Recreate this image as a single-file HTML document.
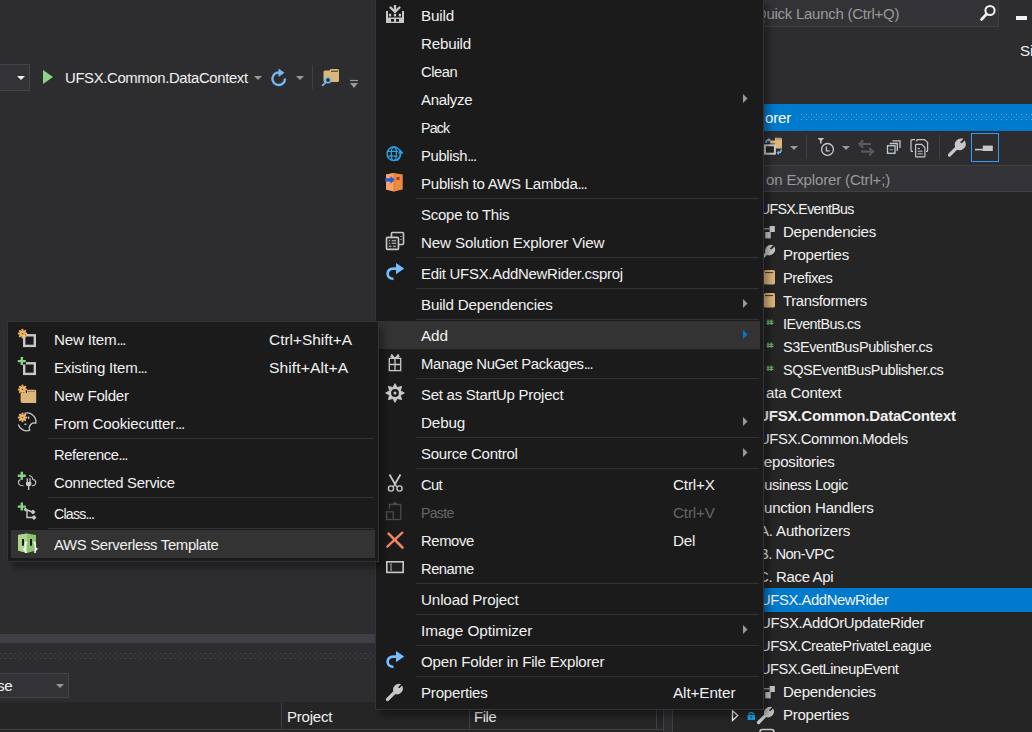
<!DOCTYPE html>
<html><head><meta charset="utf-8"><style>
html,body{margin:0;padding:0;}
body{width:1032px;height:732px;overflow:hidden;position:relative;background:#2D2D30;font-family:"Liberation Sans",sans-serif;}
.a{position:absolute;}
.t{position:absolute;white-space:nowrap;line-height:18px;height:18px;}
</style></head><body>
<div class="a" style="left:-2px;top:64px;width:32px;height:27px;background:#333337;border:1px solid #434346;box-sizing:border-box;"></div><svg class="a" style="left:17px;top:76px;" width="8" height="4" viewBox="0 0 8 4"><path d="M0 0H8L4.0 4Z" fill="#F1F1F1"/></svg><svg class="a" style="left:42px;top:69px;" width="12" height="16" viewBox="0 0 12 16"><path d="M1 1L11 8L1 15Z" fill="#8DD28A"/></svg><div class="t" style="left:64.50px;top:69px;color:#F1F1F1;font-size:15.5px;letter-spacing:-0.362px;transform:scaleX(0.9583);transform-origin:0 0;">UFSX.Common.DataContext</div><svg class="a" style="left:254px;top:76px;" width="8" height="4" viewBox="0 0 8 4"><path d="M0 0H8L4.0 4Z" fill="#999999"/></svg><svg class="a" style="left:271px;top:67.5px;" width="18" height="20" viewBox="0 0 18 20"><path d="M14 10.5 A6.3 6.3 0 1 1 8.5 4.5" fill="none" stroke="#75B8F0" stroke-width="2.4"/><path d="M7.5 0.5 L13.5 4.8 L7.5 9Z" fill="#75B8F0"/></svg><svg class="a" style="left:296px;top:76px;" width="8" height="4" viewBox="0 0 8 4"><path d="M0 0H8L4.0 4Z" fill="#999999"/></svg><div class="a" style="left:312px;top:65px;width:1px;height:24px;background:#3F3F46;"></div><svg class="a" style="left:320px;top:67px;" width="22" height="21" viewBox="0 0 22 21"><path d="M3.5 5Q3.5 3.5 5 3.5H9.5L10.5 2H17.5Q19 2 19 3.5V13.5Q19 15 17.5 15H5Q3.5 15 3.5 13.5Z" fill="#DCB67A"/><path d="M11 3.7H18V4.7H11Z" fill="#2D2D30"/><circle cx="8" cy="13.1" r="2.7" fill="#2D2D30" stroke="#75B8F0" stroke-width="1.5"/><path d="M6.1 15 L2.6 18.3" stroke="#75B8F0" stroke-width="1.8" stroke-linecap="round"/></svg><svg class="a" style="left:349px;top:79px;" width="10" height="10" viewBox="0 0 10 10"><path d="M1 1.5H9" stroke="#999" stroke-width="1.2"/><path d="M1 4H9L5 9Z" fill="#999"/></svg><div class="a" style="left:0px;top:634px;width:376px;height:9px;background:#3F3F46;"></div><svg class="a" style="left:0;top:653px" width="376" height="7"><defs><pattern id="gg" width="5" height="5" patternUnits="userSpaceOnUse"><rect x="0" y="0" width="1" height="1" fill="#505055"/><rect x="2.5" y="2.5" width="1" height="1" fill="#505055"/></pattern></defs><rect x="0" y="0" width="376" height="6.5" fill="url(#gg)"/></svg><div class="a" style="left:-2px;top:673px;width:71px;height:25px;background:#333337;border:1px solid #434346;box-sizing:border-box;"></div><div class="t" style="left:-2.99px;top:677px;color:#F1F1F1;font-size:15.5px;letter-spacing:-0.367px;transform:scaleX(0.9770);transform-origin:0 0;">se</div><svg class="a" style="left:56px;top:684px;" width="8" height="4" viewBox="0 0 8 4"><path d="M0 0H8L4.0 4Z" fill="#999999"/></svg><div class="a" style="left:0px;top:702px;width:672px;height:30px;background:#252526;"></div><div class="a" style="left:0px;top:729px;width:663px;height:1px;background:#3F3F46;"></div><div class="a" style="left:281px;top:703px;width:1px;height:26px;background:#3F3F46;"></div><div class="a" style="left:469px;top:703px;width:1px;height:26px;background:#3F3F46;"></div><div class="a" style="left:656px;top:703px;width:1px;height:26px;background:#3F3F46;"></div><div class="a" style="left:663px;top:702px;width:9px;height:30px;background:#2D2D30;"></div><div class="a" style="left:663px;top:702px;width:1px;height:30px;background:#3F3F46;"></div><div class="a" style="left:672px;top:702px;width:1px;height:30px;background:#3F3F46;"></div><div class="t" style="left:287.20px;top:708px;color:#F1F1F1;font-size:15.5px;letter-spacing:-0.238px;transform:scaleX(0.9695);transform-origin:0 0;">Project</div><div class="t" style="left:474.00px;top:708px;color:#F1F1F1;font-size:15.5px;letter-spacing:-0.384px;transform:scaleX(0.9516);transform-origin:0 0;">File</div><div class="a" style="left:700px;top:-1px;width:299px;height:28px;background:#333337;border:1px solid #3F3F46;box-sizing:border-box;"></div><div class="t" style="left:754.61px;top:5px;color:#999999;font-size:15.5px;letter-spacing:-0.253px;transform:scaleX(0.9652);transform-origin:0 0;">Quick Launch (Ctrl+Q)</div><svg class="a" style="left:978px;top:4px;" width="19" height="18" viewBox="0 0 19 18"><circle cx="12" cy="6.5" r="4.6" fill="none" stroke="#F1F1F1" stroke-width="2"/><path d="M8.6 10 L3.5 15.5" stroke="#F1F1F1" stroke-width="2.6" stroke-linecap="round"/></svg><div class="a" style="left:1016px;top:16px;width:11px;height:4px;background:#F1F1F1;"></div><div class="t" style="left:1020.00px;top:42px;color:#F1F1F1;font-size:15.5px;letter-spacing:-0.178px;transform:scaleX(0.9770);transform-origin:0 0;">Sign in</div><div class="a" style="left:673px;top:104px;width:359px;height:628px;background:#252526;"></div><div class="a" style="left:672px;top:104px;width:360px;height:27px;background:#007ACC;"></div><div class="t" style="left:764.60px;top:109px;color:#FFFFFF;font-size:15.5px;letter-spacing:-0.198px;transform:scaleX(0.9780);transform-origin:0 0;">orer</div><svg class="a" style="left:790px;top:112px" width="242" height="10"><defs><pattern id="gp" x="1" y="2" width="5" height="5" patternUnits="userSpaceOnUse"><rect x="0" y="0" width="1" height="1" fill="#66B0E4"/><rect x="2.5" y="2.5" width="1" height="1" fill="#66B0E4"/></pattern></defs><rect x="11" y="2" width="232" height="6.5" fill="url(#gp)"/></svg><div class="a" style="left:672px;top:131px;width:360px;height:34px;background:#2D2D30;"></div><div class="a" style="left:672px;top:165px;width:360px;height:27px;background:#333337;"></div><div class="a" style="left:672px;top:165px;width:360px;height:1px;background:#3F3F46;"></div><div class="a" style="left:672px;top:191px;width:360px;height:1px;background:#3F3F46;"></div><div class="t" style="left:765.80px;top:171px;color:#999999;font-size:15.5px;letter-spacing:-0.188px;transform:scaleX(0.9721);transform-origin:0 0;">on Explorer (Ctrl+;)</div><div class="a" style="left:806px;top:135px;width:1px;height:24px;background:#3F3F46;"></div><div class="a" style="left:939px;top:135px;width:1px;height:24px;background:#3F3F46;"></div><div class="a" style="left:971px;top:133px;width:28px;height:29px;border:1px solid #3399FF;box-sizing:border-box;"></div><div class="a" style="left:672px;top:588px;width:360px;height:24px;background:#007ACC;"></div><div class="t" style="left:760.44px;top:200px;color:#F1F1F1;font-size:15.5px;letter-spacing:-0.730px;transform:scaleX(0.9135);transform-origin:0 0;">UFSX.EventBus</div><div class="t" style="left:782.80px;top:223px;color:#F1F1F1;font-size:15.5px;letter-spacing:-0.268px;transform:scaleX(0.9693);transform-origin:0 0;">Dependencies</div><div class="t" style="left:782.80px;top:246px;color:#F1F1F1;font-size:15.5px;letter-spacing:-0.249px;transform:scaleX(0.9673);transform-origin:0 0;">Properties</div><div class="t" style="left:782.80px;top:269px;color:#F1F1F1;font-size:15.5px;letter-spacing:-0.436px;transform:scaleX(0.9423);transform-origin:0 0;">Prefixes</div><div class="t" style="left:782.80px;top:292px;color:#F1F1F1;font-size:15.5px;letter-spacing:-0.339px;transform:scaleX(0.9576);transform-origin:0 0;">Transformers</div><div class="t" style="left:782.80px;top:315px;color:#F1F1F1;font-size:15.5px;letter-spacing:-0.569px;transform:scaleX(0.9256);transform-origin:0 0;">IEventBus.cs</div><div class="t" style="left:782.80px;top:338px;color:#F1F1F1;font-size:15.5px;letter-spacing:-0.456px;transform:scaleX(0.9399);transform-origin:0 0;">S3EventBusPublisher.cs</div><div class="t" style="left:782.80px;top:361px;color:#F1F1F1;font-size:15.5px;letter-spacing:-0.495px;transform:scaleX(0.9366);transform-origin:0 0;">SQSEventBusPublisher.cs</div><div class="t" style="left:765.50px;top:384px;color:#F1F1F1;font-size:15.5px;letter-spacing:-0.193px;transform:scaleX(0.9751);transform-origin:0 0;">ata Context</div><div class="t" style="left:757.93px;top:407px;color:#F1F1F1;font-size:15.5px;letter-spacing:-0.237px;transform:scaleX(0.9741);transform-origin:0 0;font-weight:bold;">UFSX.Common.DataContext</div><div class="t" style="left:759.38px;top:430px;color:#F1F1F1;font-size:15.5px;letter-spacing:-0.400px;transform:scaleX(0.9560);transform-origin:0 0;">UFSX.Common.Models</div><div class="t" style="left:753.28px;top:453px;color:#F1F1F1;font-size:15.5px;letter-spacing:-0.191px;transform:scaleX(0.9739);transform-origin:0 0;">Repositories</div><div class="t" style="left:754.63px;top:476px;color:#F1F1F1;font-size:15.5px;letter-spacing:-0.414px;transform:scaleX(0.9442);transform-origin:0 0;">Business Logic</div><div class="t" style="left:755.02px;top:499px;color:#F1F1F1;font-size:15.5px;letter-spacing:-0.218px;transform:scaleX(0.9710);transform-origin:0 0;">Function Handlers</div><div class="t" style="left:758.64px;top:522px;color:#F1F1F1;font-size:15.5px;letter-spacing:-0.202px;transform:scaleX(0.9736);transform-origin:0 0;">A. Authorizers</div><div class="t" style="left:759.32px;top:545px;color:#F1F1F1;font-size:15.5px;letter-spacing:-0.551px;transform:scaleX(0.9468);transform-origin:0 0;">B. Non-VPC</div><div class="t" style="left:757.60px;top:568px;color:#F1F1F1;font-size:15.5px;letter-spacing:-0.329px;transform:scaleX(0.9615);transform-origin:0 0;">C. Race Api</div><div class="t" style="left:759.72px;top:591px;color:#F1F1F1;font-size:15.5px;letter-spacing:-0.411px;transform:scaleX(0.9538);transform-origin:0 0;">UFSX.AddNewRider</div><div class="t" style="left:759.55px;top:614px;color:#F1F1F1;font-size:15.5px;letter-spacing:-0.323px;transform:scaleX(0.9617);transform-origin:0 0;">UFSX.AddOrUpdateRider</div><div class="t" style="left:759.86px;top:637px;color:#F1F1F1;font-size:15.5px;letter-spacing:-0.444px;transform:scaleX(0.9429);transform-origin:0 0;">UFSX.CreatePrivateLeague</div><div class="t" style="left:759.96px;top:660px;color:#F1F1F1;font-size:15.5px;letter-spacing:-0.494px;transform:scaleX(0.9388);transform-origin:0 0;">UFSX.GetLineupEvent</div><div class="t" style="left:782.60px;top:683px;color:#F1F1F1;font-size:15.5px;letter-spacing:-0.277px;transform:scaleX(0.9683);transform-origin:0 0;">Dependencies</div><div class="t" style="left:782.60px;top:706px;color:#F1F1F1;font-size:15.5px;letter-spacing:-0.249px;transform:scaleX(0.9673);transform-origin:0 0;">Properties</div><svg class="a" style="left:762px;top:132px;" width="24" height="26" viewBox="0 0 24 26"><path d="M13 5.7H18.5Q20 5.7 20 7.2V16.4H13Z" fill="#DCB67A"/><path d="M8.2 8.5H13V11.5H8.2Z" fill="#DCB67A"/><path d="M14 7H19" stroke="#9E7E48" stroke-width="0.9"/>
<rect x="3" y="13.3" width="9.9" height="8.4" fill="#252526" stroke="#C8C8C8" stroke-width="2"/>
<path d="M4 11Q4 7.8 7 7.8" stroke="#75B8F0" stroke-width="1.6" fill="none"/><path d="M6.5 5.8L9 7.9L6.5 10Z" fill="#75B8F0"/>
<path d="M19.2 17.5Q19.2 20.8 16.5 20.8" stroke="#75B8F0" stroke-width="1.6" fill="none"/><path d="M17 18.8L14.5 20.8L17 23Z" fill="#75B8F0"/></svg><svg class="a" style="left:790px;top:146px;" width="8" height="4" viewBox="0 0 8 4"><path d="M0 0H8L4.0 4Z" fill="#999999"/></svg><svg class="a" style="left:812px;top:132px;" width="24" height="26" viewBox="0 0 24 26"><path d="M5.6 5.9H12.1L9.6 8.8V11.5H8.1V8.8Z" fill="#C8C8C8"/>
<circle cx="15.5" cy="17.4" r="5.9" fill="none" stroke="#C8C8C8" stroke-width="1.3"/><path d="M14.4 14.4V18.8H17.7" stroke="#C8C8C8" stroke-width="1.3" fill="none"/></svg><svg class="a" style="left:842px;top:146px;" width="8" height="4" viewBox="0 0 8 4"><path d="M0 0H8L4.0 4Z" fill="#999999"/></svg><svg class="a" style="left:856px;top:132px;" width="20" height="26" viewBox="0 0 20 26"><path d="M5 12H15" stroke="#5A5A5C" stroke-width="2.2"/><path d="M7.2 8.4L3.4 12L7.2 15.6" stroke="#5A5A5C" stroke-width="2.2" fill="none"/>
<path d="M5 19.6H15.5" stroke="#5A5A5C" stroke-width="2.2"/><path d="M13.3 16L17 19.6L13.3 23.2" stroke="#5A5A5C" stroke-width="2.2" fill="none"/></svg><svg class="a" style="left:880px;top:134px;" width="24" height="26" viewBox="0 0 24 26"><path d="M12.5 6.8H20V14" stroke="#C8C8C8" stroke-width="1.3" fill="none"/><path d="M9.8 9.5H17.3V17" stroke="#C8C8C8" stroke-width="1.3" fill="none"/>
<rect x="7.5" y="11.7" width="7.5" height="7.6" fill="#2D2D30" stroke="#C8C8C8" stroke-width="1.3"/><path d="M9.5 15.7H13" stroke="#3C8FD8" stroke-width="1.4"/></svg><svg class="a" style="left:906px;top:134px;" width="26" height="26" viewBox="0 0 26 26"><path d="M9 5.6H5.9Q5 5.6 5 6.5V16.5Q5 17.4 5.9 17.4H7" stroke="#C8C8C8" stroke-width="1.2" fill="none"/>
<path d="M10.7 7.5V6.3Q10.7 5.6 11.4 5.6H18.6L21.6 8.6V16.5Q21.6 17.4 20.7 17.4H20" stroke="#C8C8C8" stroke-width="1.2" fill="none"/>
<path d="M9.6 22.2V11Q9.6 10.3 10.3 10.3H15.7L18.9 13.5V22.2Q18.9 22.9 18.2 22.9H10.3Q9.6 22.9 9.6 22.2Z" fill="#2D2D30" stroke="#C8C8C8" stroke-width="1.2"/>
<path d="M11.7 14.5H14M11.7 17.2H16.5M11.7 19.8H16.5" stroke="#C8C8C8" stroke-width="1"/></svg><svg class="a" style="left:944px;top:134px;" width="26" height="26" viewBox="0 0 26 26"><path d="M5.5 21L13 13.5" stroke="#C8C8C8" stroke-width="3.2" stroke-linecap="round"/>
<path d="M12.5 14A5.6 5.6 0 0 1 18.3 5.2L15.3 8.2L17.5 10.4L20.5 7.4A5.6 5.6 0 0 1 12 14.3Z" fill="#C8C8C8" stroke="#C8C8C8" stroke-width="1.2"/></svg><svg class="a" style="left:971px;top:133px;" width="28" height="29" viewBox="0 0 28 29"><path d="M4 16.6H12" stroke="#C8C8C8" stroke-width="1.6"/><rect x="11.8" y="12.6" width="10" height="5.4" fill="#C8C8C8"/></svg><svg class="a" style="left:764px;top:226px;" width="14" height="16" viewBox="0 0 14 16"><rect x="5.6" y="0" width="5.2" height="6" fill="#C8C8C8"/><rect x="1.2" y="6" width="5.5" height="6.4" fill="#C8C8C8"/><path d="M0 2.8H5.6" stroke="#C8C8C8" stroke-width="1"/></svg><svg class="a" style="left:764px;top:686px;" width="14" height="16" viewBox="0 0 14 16"><rect x="5.6" y="0" width="5.2" height="6" fill="#C8C8C8"/><rect x="1.2" y="6" width="5.5" height="6.4" fill="#C8C8C8"/><path d="M0 2.8H5.6" stroke="#C8C8C8" stroke-width="1"/></svg><svg class="a" style="left:759px;top:243px;" width="18" height="18" viewBox="0 0 18 18"><path d="M2 16L8 10" stroke="#C8C8C8" stroke-width="3" stroke-linecap="round"/>
<path d="M7.5 10.5A5.3 5.3 0 0 1 13 2.5L10.2 5.3L12.4 7.5L15.2 4.7A5.3 5.3 0 0 1 7.2 10.8Z" fill="#C8C8C8" stroke="#C8C8C8" stroke-width="1.2"/></svg><svg class="a" style="left:754px;top:702px;" width="24" height="24" viewBox="0 0 24 24"><path d="M4.5 20.5L12 13" stroke="#C8C8C8" stroke-width="3.2" stroke-linecap="round"/>
<path d="M11.5 13.5A5.3 5.3 0 0 1 17 5.5L14.3 8.2L16.2 10.2L18.9 7.5A5.3 5.3 0 0 1 11 13.8Z" fill="#C8C8C8" stroke="#C8C8C8" stroke-width="1.2"/></svg><svg class="a" style="left:764px;top:270px;" width="14" height="16" viewBox="0 0 14 16"><rect x="0" y="0" width="11" height="14.4" rx="1.5" fill="#DCB67A"/><path d="M1 2.6H9.2" stroke="#2A2418" stroke-width="0.9"/></svg><svg class="a" style="left:764px;top:293px;" width="14" height="16" viewBox="0 0 14 16"><rect x="0" y="0" width="11" height="14.4" rx="1.5" fill="#DCB67A"/><path d="M1 2.6H9.2" stroke="#2A2418" stroke-width="0.9"/></svg><svg class="a" style="left:763px;top:318.5px;" width="14" height="12" viewBox="0 0 14 12"><path d="M3.6 2.2H10.4M3.6 4.4H10.4M5 0.6V6M8.2 0.6V6" stroke="#6DBF6A" stroke-width="1.1"/><rect x="0" y="1.5" width="1.3" height="1.3" fill="#4C8A4C"/><rect x="0" y="8" width="1.3" height="1.3" fill="#4C8A4C"/></svg><svg class="a" style="left:763px;top:341.5px;" width="14" height="12" viewBox="0 0 14 12"><path d="M3.6 2.2H10.4M3.6 4.4H10.4M5 0.6V6M8.2 0.6V6" stroke="#6DBF6A" stroke-width="1.1"/><rect x="0" y="1.5" width="1.3" height="1.3" fill="#4C8A4C"/><rect x="0" y="8" width="1.3" height="1.3" fill="#4C8A4C"/></svg><svg class="a" style="left:763px;top:364.5px;" width="14" height="12" viewBox="0 0 14 12"><path d="M3.6 2.2H10.4M3.6 4.4H10.4M5 0.6V6M8.2 0.6V6" stroke="#6DBF6A" stroke-width="1.1"/><rect x="0" y="1.5" width="1.3" height="1.3" fill="#4C8A4C"/><rect x="0" y="8" width="1.3" height="1.3" fill="#4C8A4C"/></svg><svg class="a" style="left:731px;top:709px;" width="9" height="13" viewBox="0 0 9 13"><path d="M1.5 1.7L6.7 6.6L1.5 11.5Z" fill="none" stroke="#F1F1F1" stroke-width="1.3" stroke-linejoin="miter"/></svg><svg class="a" style="left:746px;top:709px;" width="11" height="12" viewBox="0 0 11 12"><path d="M2.6 5.2Q5.3 1.6 8 5.2" fill="none" stroke="#1BA1E2" stroke-width="1.5"/><rect x="1.6" y="5.8" width="7.4" height="5.1" fill="#1BA1E2"/><rect x="4.7" y="7.3" width="1.2" height="2.2" fill="#145A80"/></svg><svg class="a" style="left:758px;top:727px;" width="18" height="6" viewBox="0 0 18 6"><rect x="2" y="2.5" width="14" height="8" rx="2.5" fill="none" stroke="#C8C8C8" stroke-width="1.6"/></svg><div class="a" style="left:375px;top:-3px;width:389px;height:713px;background:#1B1B1C;border:1px solid #333337;box-sizing:border-box;box-shadow:5px 6px 6px rgba(0,0,0,0.32);"></div><div class="t" style="left:421.30px;top:7px;color:#F1F1F1;font-size:15.5px;letter-spacing:-0.152px;transform:scaleX(0.9821);transform-origin:0 0;">Build</div><div class="t" style="left:421.30px;top:35px;color:#F1F1F1;font-size:15.5px;letter-spacing:-0.200px;transform:scaleX(0.9767);transform-origin:0 0;">Rebuild</div><div class="t" style="left:421.30px;top:63px;color:#F1F1F1;font-size:15.5px;letter-spacing:-0.488px;transform:scaleX(0.9493);transform-origin:0 0;">Clean</div><div class="t" style="left:421.30px;top:91px;color:#F1F1F1;font-size:15.5px;letter-spacing:-0.298px;transform:scaleX(0.9665);transform-origin:0 0;">Analyze</div><svg class="a" style="left:743px;top:94px;" width="5" height="9" viewBox="0 0 5 9"><path d="M0 0L4.5 4.5L0 9Z" fill="#999999"/></svg><div class="t" style="left:421.30px;top:119px;color:#F1F1F1;font-size:15.5px;letter-spacing:-0.886px;transform:scaleX(0.9166);transform-origin:0 0;">Pack</div><div class="t" style="left:421.30px;top:147px;color:#F1F1F1;font-size:15.5px;letter-spacing:-0.368px;transform:scaleX(0.9560);transform-origin:0 0;">Publish<span style="letter-spacing:-1.3px">...</span></div><div class="t" style="left:421.30px;top:175px;color:#F1F1F1;font-size:15.5px;letter-spacing:-0.245px;transform:scaleX(0.9700);transform-origin:0 0;">Publish to AWS Lambda<span style="letter-spacing:-1.3px">...</span></div><div class="a" style="left:416px;top:198px;width:343px;height:1px;background:#333337;"></div><div class="t" style="left:421.30px;top:206px;color:#F1F1F1;font-size:15.5px;letter-spacing:-0.248px;transform:scaleX(0.9675);transform-origin:0 0;">Scope to This</div><div class="t" style="left:421.30px;top:234px;color:#F1F1F1;font-size:15.5px;letter-spacing:-0.151px;transform:scaleX(0.9798);transform-origin:0 0;">New Solution Explorer View</div><div class="a" style="left:416px;top:257px;width:343px;height:1px;background:#333337;"></div><div class="t" style="left:421.30px;top:265px;color:#F1F1F1;font-size:15.5px;letter-spacing:-0.278px;transform:scaleX(0.9642);transform-origin:0 0;">Edit UFSX.AddNewRider.csproj</div><div class="a" style="left:416px;top:288px;width:343px;height:1px;background:#333337;"></div><div class="t" style="left:421.30px;top:296px;color:#F1F1F1;font-size:15.5px;letter-spacing:-0.181px;transform:scaleX(0.9772);transform-origin:0 0;">Build Dependencies</div><svg class="a" style="left:743px;top:299px;" width="5" height="9" viewBox="0 0 5 9"><path d="M0 0L4.5 4.5L0 9Z" fill="#999999"/></svg><div class="a" style="left:416px;top:319px;width:343px;height:1px;background:#333337;"></div><div class="a" style="left:379px;top:321px;width:381px;height:28px;background:#333334;"></div><div class="t" style="left:421.30px;top:327px;color:#F1F1F1;font-size:15.5px;letter-spacing:-0.147px;transform:scaleX(0.9892);transform-origin:0 0;">Add</div><svg class="a" style="left:743px;top:330px;" width="5" height="9" viewBox="0 0 5 9"><path d="M0 0L4.5 4.5L0 9Z" fill="#007ACC"/></svg><div class="t" style="left:421.30px;top:355px;color:#F1F1F1;font-size:15.5px;letter-spacing:-0.363px;transform:scaleX(0.9577);transform-origin:0 0;">Manage NuGet Packages<span style="letter-spacing:-1.3px">...</span></div><div class="a" style="left:416px;top:378px;width:343px;height:1px;background:#333337;"></div><div class="t" style="left:421.30px;top:386px;color:#F1F1F1;font-size:15.5px;letter-spacing:-0.256px;transform:scaleX(0.9637);transform-origin:0 0;">Set as StartUp Project</div><div class="t" style="left:421.30px;top:414px;color:#F1F1F1;font-size:15.5px;letter-spacing:-0.184px;transform:scaleX(0.9836);transform-origin:0 0;">Debug</div><svg class="a" style="left:743px;top:417px;" width="5" height="9" viewBox="0 0 5 9"><path d="M0 0L4.5 4.5L0 9Z" fill="#999999"/></svg><div class="a" style="left:416px;top:437px;width:343px;height:1px;background:#333337;"></div><div class="t" style="left:421.30px;top:445px;color:#F1F1F1;font-size:15.5px;letter-spacing:-0.247px;transform:scaleX(0.9679);transform-origin:0 0;">Source Control</div><svg class="a" style="left:743px;top:448px;" width="5" height="9" viewBox="0 0 5 9"><path d="M0 0L4.5 4.5L0 9Z" fill="#999999"/></svg><div class="a" style="left:416px;top:468px;width:343px;height:1px;background:#333337;"></div><div class="t" style="left:421.30px;top:476px;color:#F1F1F1;font-size:15.5px;letter-spacing:-0.619px;transform:scaleX(0.9458);transform-origin:0 0;">Cut</div><div class="t" style="left:673.00px;top:476px;color:#F1F1F1;font-size:15.5px;letter-spacing:-0.150px;transform:scaleX(0.9824);transform-origin:0 0;">Ctrl+X</div><div class="t" style="left:421.30px;top:504px;color:#656565;font-size:15.5px;letter-spacing:-0.797px;transform:scaleX(0.9126);transform-origin:0 0;">Paste</div><div class="t" style="left:673.00px;top:504px;color:#656565;font-size:15.5px;letter-spacing:-0.150px;transform:scaleX(0.9824);transform-origin:0 0;">Ctrl+V</div><div class="t" style="left:421.30px;top:532px;color:#F1F1F1;font-size:15.5px;letter-spacing:-0.456px;transform:scaleX(0.9589);transform-origin:0 0;">Remove</div><div class="t" style="left:673.00px;top:532px;color:#F1F1F1;font-size:15.5px;letter-spacing:-0.188px;transform:scaleX(0.9836);transform-origin:0 0;">Del</div><div class="t" style="left:421.30px;top:560px;color:#F1F1F1;font-size:15.5px;letter-spacing:-0.539px;transform:scaleX(0.9518);transform-origin:0 0;">Rename</div><div class="a" style="left:416px;top:583px;width:343px;height:1px;background:#333337;"></div><div class="t" style="left:421.30px;top:591px;color:#F1F1F1;font-size:15.5px;letter-spacing:-0.149px;transform:scaleX(0.9805);transform-origin:0 0;">Unload Project</div><div class="a" style="left:416px;top:614px;width:343px;height:1px;background:#333337;"></div><div class="t" style="left:421.30px;top:622px;color:#F1F1F1;font-size:15.5px;letter-spacing:-0.081px;transform:scaleX(0.9899);transform-origin:0 0;">Image Optimizer</div><svg class="a" style="left:743px;top:625px;" width="5" height="9" viewBox="0 0 5 9"><path d="M0 0L4.5 4.5L0 9Z" fill="#999999"/></svg><div class="a" style="left:416px;top:645px;width:343px;height:1px;background:#333337;"></div><div class="t" style="left:421.30px;top:653px;color:#F1F1F1;font-size:15.5px;letter-spacing:-0.190px;transform:scaleX(0.9728);transform-origin:0 0;">Open Folder in File Explorer</div><div class="a" style="left:416px;top:676px;width:343px;height:1px;background:#333337;"></div><div class="t" style="left:421.30px;top:684px;color:#F1F1F1;font-size:15.5px;letter-spacing:-0.216px;transform:scaleX(0.9718);transform-origin:0 0;">Properties</div><div class="t" style="left:673.00px;top:684px;color:#F1F1F1;font-size:15.5px;letter-spacing:-0.104px;transform:scaleX(0.9868);transform-origin:0 0;">Alt+Enter</div><div class="a" style="left:7px;top:321px;width:372px;height:241px;background:#1B1B1C;border:1px solid #333337;box-sizing:border-box;box-shadow:5px 6px 6px rgba(0,0,0,0.32);"></div><div class="t" style="left:53.70px;top:331px;color:#F1F1F1;font-size:15.5px;letter-spacing:-0.202px;transform:scaleX(0.9782);transform-origin:0 0;">New Item<span style="letter-spacing:-1.3px">...</span></div><div class="t" style="left:268.90px;top:331px;color:#F1F1F1;font-size:15.5px;letter-spacing:-0.023px;transform:scaleX(0.9970);transform-origin:0 0;">Ctrl+Shift+A</div><div class="t" style="left:53.70px;top:359px;color:#F1F1F1;font-size:15.5px;letter-spacing:-0.211px;transform:scaleX(0.9716);transform-origin:0 0;">Existing Item<span style="letter-spacing:-1.3px">...</span></div><div class="t" style="left:268.90px;top:359px;color:#F1F1F1;font-size:15.5px;letter-spacing:0.080px;transform:scaleX(1.0102);transform-origin:0 0;">Shift+Alt+A</div><div class="t" style="left:53.70px;top:387px;color:#F1F1F1;font-size:15.5px;letter-spacing:-0.236px;transform:scaleX(0.9724);transform-origin:0 0;">New Folder</div><div class="t" style="left:53.70px;top:415px;color:#F1F1F1;font-size:15.5px;letter-spacing:-0.197px;transform:scaleX(0.9749);transform-origin:0 0;">From Cookiecutter<span style="letter-spacing:-1.3px">...</span></div><div class="a" style="left:48px;top:438px;width:326px;height:1px;background:#333337;"></div><div class="t" style="left:53.70px;top:446px;color:#F1F1F1;font-size:15.5px;letter-spacing:-0.412px;transform:scaleX(0.9525);transform-origin:0 0;">Reference<span style="letter-spacing:-1.3px">...</span></div><div class="t" style="left:53.70px;top:474px;color:#F1F1F1;font-size:15.5px;letter-spacing:-0.313px;transform:scaleX(0.9602);transform-origin:0 0;">Connected Service</div><div class="a" style="left:48px;top:497px;width:326px;height:1px;background:#333337;"></div><div class="t" style="left:53.70px;top:505px;color:#F1F1F1;font-size:15.5px;letter-spacing:-0.817px;transform:scaleX(0.9092);transform-origin:0 0;">Class<span style="letter-spacing:-1.3px">...</span></div><div class="a" style="left:48px;top:528px;width:326px;height:1px;background:#333337;"></div><div class="a" style="left:11px;top:530px;width:364px;height:28px;background:#333334;"></div><div class="t" style="left:53.70px;top:536px;color:#F1F1F1;font-size:15.5px;letter-spacing:-0.325px;transform:scaleX(0.9585);transform-origin:0 0;">AWS Serverless Template</div><svg class="a" style="left:383px;top:2px;" width="24" height="24" viewBox="0 0 24 24"><path d="M3 9H5V15.5H19V9H21V21H3Z" fill="#C8C8C8"/>
<rect x="8" y="17" width="3" height="2.7" fill="#1B1B1C"/><rect x="13" y="17" width="3" height="2.7" fill="#1B1B1C"/>
<rect x="5.9" y="11.8" width="2.3" height="2.6" fill="#C8C8C8"/><rect x="10.8" y="11.8" width="2.3" height="2.6" fill="#C8C8C8"/><rect x="15.7" y="11.8" width="2.3" height="2.6" fill="#C8C8C8"/>
<path d="M12 3V9.5" stroke="#C8C8C8" stroke-width="2.3"/><path d="M7.5 5.5L12 9.8L16.5 5.5" stroke="#C8C8C8" stroke-width="2.3" fill="none" stroke-linecap="round"/></svg><svg class="a" style="left:383px;top:142px;" width="24" height="24" viewBox="0 0 24 24"><circle cx="10.8" cy="11.8" r="6.8" stroke="#2AA3E6" stroke-width="1.4" fill="none"/>
<ellipse cx="10.8" cy="11.8" rx="2.6" ry="6.8" stroke="#2AA3E6" stroke-width="1.3" fill="none"/>
<path d="M4.5 9.3H15 M4.3 14.2H14.5" stroke="#2AA3E6" stroke-width="1.3"/>
<path d="M14 18.5Q17.6 15.5 17.6 10.5" stroke="#2AA3E6" stroke-width="1.6" fill="none"/><path d="M14.8 11.5L17.6 7.6L20.6 11.5Z" fill="#2AA3E6"/></svg><svg class="a" style="left:383px;top:170px;" width="24" height="24" viewBox="0 0 24 24"><path d="M3 4.5L11 3L19.7 4.5V19.5L11 21.5L3 19.5Z" fill="#EE8A3F"/>
<path d="M3 4.5L11 3V21.5L3 19.5Z" fill="#F4A36A"/><path d="M11 3V21.5" stroke="#D9722A" stroke-width="0.8"/>
<rect x="13.5" y="7" width="3" height="3" fill="#A83A20"/><rect x="13.5" y="15.5" width="3" height="1.3" fill="#D0A030"/>
<path d="M2 8.2H7.5V6L11.8 9.8L7.5 13.7V11.4H2Z" fill="#2458D8"/></svg><svg class="a" style="left:383px;top:229px;" width="24" height="24" viewBox="0 0 24 24"><rect x="8.5" y="3.5" width="12" height="12" rx="1" fill="#1B1B1C" stroke="#C8C8C8" stroke-width="1.6"/>
<rect x="3.5" y="8.4" width="12" height="12" rx="1" fill="#2A2A2B" stroke="#C8C8C8" stroke-width="1.6"/>
<path d="M6 11.8H7M8.8 11.8H13M6 14.3H7M8.8 14.3H13M6 17.3H8.3M10.2 17.3H12.8" stroke="#C8C8C8" stroke-width="1.1"/>
<path d="M18 7V8M18 10V11" stroke="#C8C8C8" stroke-width="1.1"/></svg><svg class="a" style="left:383px;top:260px;" width="24" height="24" viewBox="0 0 24 24"><path d="M10.5 19Q4.6 18.5 4.6 13.8Q4.6 8.6 10.5 8.6H14.5" stroke="#75BEFF" stroke-width="2.6" fill="none"/>
<path d="M13 3L21.2 8.6L13 14.2Z" fill="#75BEFF"/></svg><svg class="a" style="left:383px;top:350px;" width="24" height="24" viewBox="0 0 24 24"><rect x="6.3" y="8.4" width="11.4" height="12.2" fill="none" stroke="#C8C8C8" stroke-width="1.3"/>
<path d="M12 8.4V20.6M6.3 14.5H17.7" stroke="#C8C8C8" stroke-width="1.3"/>
<path d="M12 8.2L8.8 4.3L7.8 7Z M12 8.2L15.2 4.3L16.2 7Z" fill="#C8C8C8" stroke="#C8C8C8" stroke-width="1"/></svg><svg class="a" style="left:383px;top:381px;" width="24" height="24" viewBox="0 0 24 24"><path d="M12.00 2.60 L14.26 6.55 L18.65 5.35 L17.45 9.74 L21.40 12.00 L17.45 14.26 L18.65 18.65 L14.26 17.45 L12.00 21.40 L9.74 17.45 L5.35 18.65 L6.55 14.26 L2.60 12.00 L6.55 9.74 L5.35 5.35 L9.74 6.55Z" fill="#C8C8C8" stroke="#C8C8C8" stroke-width="0.8" stroke-linejoin="round"/>
<circle cx="12" cy="12" r="3.9" fill="#1B1B1C"/><circle cx="12" cy="12" r="1.5" fill="#C8C8C8"/></svg><svg class="a" style="left:383px;top:471px;" width="24" height="24" viewBox="0 0 24 24"><path d="M6.5 3.5L12 13M17.5 3.5L12 13" stroke="#C8C8C8" stroke-width="1.8" fill="none"/>
<circle cx="8" cy="17.5" r="2.6" stroke="#C8C8C8" stroke-width="1.4" fill="none"/><circle cx="16.5" cy="17.5" r="2.6" stroke="#C8C8C8" stroke-width="1.4" fill="none"/>
<path d="M10.3 16L12 13L13.8 16" stroke="#C8C8C8" stroke-width="1.4" fill="none"/></svg><svg class="a" style="left:383px;top:499px;" width="24" height="24" viewBox="0 0 24 24"><path d="M6.5 10V5.5H17.8V20.5" stroke="#4A4A4C" stroke-width="1.3" fill="none"/><path d="M9.8 5.5L12 3.3L14.2 5.5" stroke="#4A4A4C" stroke-width="1.3" fill="none"/>
<rect x="3.6" y="12.8" width="6.6" height="7.7" stroke="#4A4A4C" stroke-width="1.3" fill="none"/><path d="M10.2 20.5H17.8" stroke="#4A4A4C" stroke-width="1.3"/></svg><svg class="a" style="left:383px;top:527px;" width="24" height="24" viewBox="0 0 24 24"><path d="M5.6 6.6L19.5 20.5" stroke="#F08466" stroke-width="2.6" stroke-linecap="round"/>
<path d="M19.3 5.6L4.3 19.6" stroke="#F08466" stroke-width="2.3" stroke-linecap="round"/></svg><svg class="a" style="left:383px;top:555px;" width="24" height="24" viewBox="0 0 24 24"><rect x="3.8" y="6.8" width="16.4" height="10.6" fill="#1E1E1F" stroke="#C8C8C8" stroke-width="1.6"/>
<path d="M6.9 8.7L8 9.6L9.1 8.7M8 9.6V14.6M6.9 15.5L8 14.6L9.1 15.5" stroke="#C8C8C8" stroke-width="0.8" fill="none"/></svg><svg class="a" style="left:383px;top:648px;" width="24" height="24" viewBox="0 0 24 24"><path d="M10.5 19Q4.6 18.5 4.6 13.8Q4.6 8.6 10.5 8.6H14.5" stroke="#75BEFF" stroke-width="2.6" fill="none"/>
<path d="M13 3L21.2 8.6L13 14.2Z" fill="#75BEFF"/></svg><svg class="a" style="left:383px;top:679px;" width="24" height="24" viewBox="0 0 24 24"><path d="M4.5 20.5L12 13" stroke="#C8C8C8" stroke-width="3.2" stroke-linecap="round"/>
<path d="M11.5 13.5A5.3 5.3 0 0 1 17 5.5L14.3 8.2L16.2 10.2L18.9 7.5A5.3 5.3 0 0 1 11 13.8Z" fill="#C8C8C8" stroke="#C8C8C8" stroke-width="1.2"/></svg><svg class="a" style="left:12px;top:325px;" width="24" height="24" viewBox="0 0 24 24"><rect x="12.2" y="10.3" width="10.6" height="10.6" fill="none" stroke="#C8C8C8" stroke-width="2.4"/><rect x="9" y="6" width="5" height="5" fill="#1B1B1C"/><path d="M6.70 8.60L14.30 8.60M7.81 5.91L13.19 11.29M10.50 4.80L10.50 12.40M13.19 5.91L7.81 11.29" stroke="#F2B866" stroke-width="2" stroke-linecap="round"/><circle cx="10.5" cy="8.6" r="1.6" fill="#F2B866"/><circle cx="10.5" cy="8.6" r="0.7" fill="#1B1B1C"/></svg><svg class="a" style="left:12px;top:353px;" width="24" height="24" viewBox="0 0 24 24"><rect x="12.2" y="10.3" width="10.6" height="10.6" fill="none" stroke="#C8C8C8" stroke-width="2.4"/><rect x="8" y="5" width="6" height="6.5" fill="#1B1B1C"/><path d="M5.800000000000001 8.1H13.8M9.8 4.1V12.1" stroke="#89D185" stroke-width="2.4"/></svg><svg class="a" style="left:12px;top:381px;" width="26" height="24" viewBox="0 0 26 24"><path d="M8.6 12.5Q8.6 10.8 10.4 10.8H14.5L15.5 8.8H23Q24.2 8.8 24.2 10V22H10.4Q8.6 22 8.6 20.2Z" fill="#DCB67A"/><path d="M15.8 10.5H23" stroke="#A07F45" stroke-width="0.9"/><rect x="6" y="3.5" width="9" height="8.5" fill="#1B1B1C"/><path d="M6.70 8.40L14.30 8.40M7.81 5.71L13.19 11.09M10.50 4.60L10.50 12.20M13.19 5.71L7.81 11.09" stroke="#F2B866" stroke-width="2" stroke-linecap="round"/><circle cx="10.5" cy="8.4" r="1.6" fill="#F2B866"/><circle cx="10.5" cy="8.4" r="0.7" fill="#1B1B1C"/></svg><svg class="a" style="left:12px;top:409px;" width="26" height="24" viewBox="0 0 26 24"><path d="M12.5 4.4A8.8 8.8 0 0 1 23.8 14.2A5 5 0 0 0 17.8 21.2A8.8 8.8 0 0 1 6.3 15.5" fill="none" stroke="#C8C8C8" stroke-width="1.3"/><ellipse cx="16.6" cy="8.8" rx="0.8" ry="1.2" fill="#C8C8C8"/><ellipse cx="13.4" cy="15.3" rx="1.3" ry="0.8" fill="#C8C8C8"/><path d="M6.70 8.40L14.30 8.40M7.81 5.71L13.19 11.09M10.50 4.60L10.50 12.20M13.19 5.71L7.81 11.09" stroke="#F2B866" stroke-width="2" stroke-linecap="round"/><circle cx="10.5" cy="8.4" r="1.6" fill="#F2B866"/><circle cx="10.5" cy="8.4" r="0.7" fill="#1B1B1C"/></svg><svg class="a" style="left:12px;top:468px;" width="26" height="24" viewBox="0 0 26 24"><path d="M8.5 11.5Q6 12.5 6.5 15Q7 17.8 11.5 17.8M19.8 17.8Q23.8 17.5 23.8 14.5Q23.5 11.5 20.8 11.5Q20.5 8 17 7.5" fill="none" stroke="#C8C8C8" stroke-width="1.1"/><path d="M14 14H19.3V16.8Q19.3 17.8 16.65 18.5Q14 17.8 14 16.8Z" fill="#C8C8C8"/><path d="M15.3 10.3V14M18 10.3V14M16.65 18V22" stroke="#C8C8C8" stroke-width="1.3"/><path d="M5.800000000000001 7.8H13.8M9.8 3.8V11.8" stroke="#89D185" stroke-width="2.4"/></svg><svg class="a" style="left:12px;top:499px;" width="26" height="24" viewBox="0 0 26 24"><path d="M11.5 10.5L13.5 8.5L15.5 10.5L13.5 12.5Z M18.5 13L21 10.5L23.5 13L21 15.5Z M19.5 18.5L22 16L24.5 18.5L22 21Z" fill="#C8C8C8"/><path d="M13.5 10.5L20.5 13M15 12V18.5H21" stroke="#C8C8C8" stroke-width="1.4" fill="none"/><path d="M5.800000000000001 7.6H13.8M9.8 3.5999999999999996V11.6" stroke="#89D185" stroke-width="2.4"/></svg><svg class="a" style="left:12px;top:530px;" width="28" height="26" viewBox="0 0 28 26"><path d="M6 5L15 3.4L24 5V20.5L15 23L6 20.5Z" fill="#8CC46E"/><path d="M6 5L15 3.4V23L6 20.5Z" fill="#A9D58E"/>
<rect x="10" y="9" width="2" height="6.7" fill="#1B1B1C"/><rect x="18" y="9" width="2" height="6.7" fill="#1B1B1C"/>
<path d="M15 12Q13 12.5 13.5 16Q13.8 18.5 12.2 19Q14 20 13.8 23M21.5 12Q23.5 12.5 23.3 16Q23 18.5 24.5 19Q22.8 20 23 23" stroke="#FFFFFF" stroke-width="1.6" fill="none"/></svg>
</body></html>
